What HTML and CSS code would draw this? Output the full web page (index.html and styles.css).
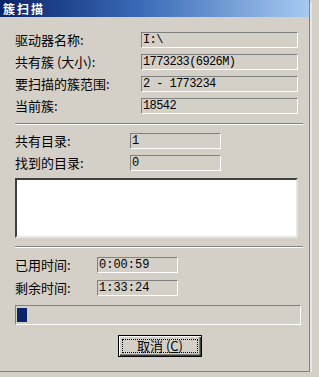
FILE: index.html
```html
<!DOCTYPE html>
<html lang="zh-CN">
<head>
  <meta charset="UTF-8">
  <title>簇扫描</title>
  <link rel="stylesheet" href="styles.css">
</head>
<body>
  <div class="window">
    <div class="titlebar"><span class="title">簇扫描</span></div>
    <div class="content">
      <div class="rows rows-top">
        <span class="label">驱动器名称:</span><span class="field">I:\</span>
        <span class="label">共有簇 (大小):</span><span class="field">1773233(6926M)</span>
        <span class="label">要扫描的簇范围:</span><span class="field">2 - 1773234</span>
        <span class="label">当前簇:</span><span class="field">18542</span>
      </div>
      <div class="etched"></div>
      <div class="rows rows-dir">
        <span class="label">共有目录:</span><span class="field">1</span>
        <span class="label">找到的目录:</span><span class="field">0</span>
      </div>
      <div class="listbox"></div>
      <div class="etched"></div>
      <div class="rows rows-time">
        <span class="label">已用时间:</span><span class="field time">0:00:59</span>
        <span class="label">剩余时间:</span><span class="field time">1:33:24</span>
      </div>
      <div class="progress"><div class="progress-fill" style="width: 10px;"></div></div>
      <div class="actions">
        <button class="btn"><span class="focus">取消 (<u>C</u>)</span></button>
      </div>
    </div>
  </div>
</body>
</html>
```

FILE: styles.css
```css
body {
  margin: 0;
  background: #d4d0c8;
  font-family: "Noto Sans CJK SC", "Liberation Sans", sans-serif;
  color: #000;
}
.window {
  width: 310px;
  height: 372px;
  background: #d4d0c8;
  border-right: 1px solid #808080;
  border-bottom: 1px solid #808080;
  box-shadow: 2px 2px 0 #e8e6e2;
  box-sizing: border-box;
}
.titlebar {
  height: 17px;
  background: linear-gradient(90deg, #0a246a, #3a6ab8 45%, #a6caf0);
  padding-left: 3px;
}
.title {
  color: #fff;
  font-weight: bold;
  font-size: 12px;
  letter-spacing: 2px;
  line-height: 17px;
  display: block;
}
.content {
  padding: 13px 0 0 15px;
}
.rows {
  display: grid;
  align-items: center;
}
.label {
  font-size: 13px;
  line-height: 16px;
  white-space: nowrap;
}
.field {
  box-sizing: border-box;
  border-top: 1px solid #808080;
  border-left: 1px solid #808080;
  border-right: 1px solid #fff;
  border-bottom: 1px solid #fff;
  font-family: "Liberation Mono", monospace;
  font-size: 12px;
  letter-spacing: -0.6px;
  padding-left: 1px;
  display: flex;
  align-items: center;
}
.rows-top {
  grid-template-columns: 126px 157px;
  grid-auto-rows: 19px;
  row-gap: 3px;
}
.rows-dir {
  grid-template-columns: 115px 91px;
  grid-auto-rows: 18px;
  row-gap: 4px;
  margin-top: 7px;
}
.rows-time {
  grid-template-columns: 82px 81px;
  grid-auto-rows: 18px;
  row-gap: 5px;
  margin-top: 8px;
}
.time {
  letter-spacing: 0;
}
.etched {
  width: 288px;
  height: 1px;
  background: #808080;
  border-bottom: 1px solid #fff;
  margin-top: 8px;
}
.listbox {
  width: 283px;
  height: 60px;
  box-sizing: border-box;
  margin-top: 6px;
  background: #fff;
  border-top: 2px solid #404040;
  border-left: 2px solid #404040;
  border-right: 2px solid #e8e6e2;
  border-bottom: 2px solid #e8e6e2;
}
.rows-time + .progress {
  margin-top: 8px;
}
.progress {
  width: 286px;
  height: 20px;
  box-sizing: border-box;
  border-top: 1px solid #808080;
  border-left: 1px solid #808080;
  border-right: 1px solid #fff;
  border-bottom: 1px solid #fff;
  padding: 2px 1px;
}
.progress-fill {
  height: 100%;
  background: #0a246a;
}
.actions {
  margin-top: 10px;
  padding-left: 103px;
}
.btn {
  width: 84px;
  height: 22px;
  background: #d4d0c8;
  border: 1px solid #000;
  box-shadow: inset 1px 1px 0 #fff, inset -1px -1px 0 #404040, inset -2px -2px 0 #808080;
  padding: 3px;
  font-family: "Noto Sans CJK SC", "Liberation Sans", sans-serif;
  font-size: 13px;
  display: flex;
}
.focus {
  flex: 1;
  border: 1px dotted #000;
  line-height: 12px;
  text-align: center;
}
```
